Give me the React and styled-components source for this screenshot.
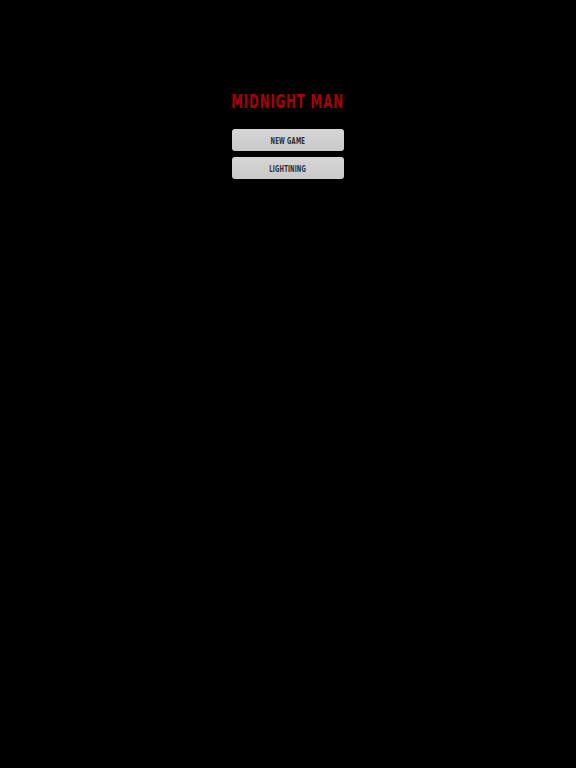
import React from 'react';
import styled, { createGlobalStyle } from 'styled-components';

const GlobalStyle = createGlobalStyle`
  html, body {
    margin: 0;
    padding: 0;
    background: #000;
  }
`;

const Screen = styled.div`
  width: 576px;
  height: 768px;
  background: #000;
  display: flex;
  flex-direction: column;
  align-items: center;
  padding-top: 92px;
  box-sizing: border-box;
`;

const Title = styled.h1`
  margin: 0 0 18px;
  font-family: "DejaVu Sans Condensed", "Liberation Sans", sans-serif;
  font-weight: 700;
  font-size: 19px;
  line-height: 19px;
  letter-spacing: 1.2px;
  color: #a30000;
  transform: scaleX(0.69);
  white-space: nowrap;
`;

const Menu = styled.div`
  display: flex;
  flex-direction: column;
  gap: 6px;
`;

const MenuButton = styled.button`
  width: 112px;
  height: 22px;
  border: none;
  border-radius: 3px;
  background: linear-gradient(#d6d6d6, #c9c9c9);
  padding: 0;
  display: flex;
  align-items: center;
  justify-content: center;
  cursor: pointer;
`;

const Label = styled.span`
  display: inline-block;
  color: #2e2e2e;
  font-family: "DejaVu Sans Condensed", "Liberation Sans", sans-serif;
  font-weight: 700;
  font-size: 9.5px;
  letter-spacing: 0.3px;
  transform: scaleX(0.62);
  white-space: nowrap;
`;

export default function App() {
  return (
    <>
      <GlobalStyle />
      <Screen>
        <Title>MIDNIGHT MAN</Title>
        <Menu>
          <MenuButton><Label>NEW GAME</Label></MenuButton>
          <MenuButton><Label>LIGHTINING</Label></MenuButton>
        </Menu>
      </Screen>
    </>
  );
}
